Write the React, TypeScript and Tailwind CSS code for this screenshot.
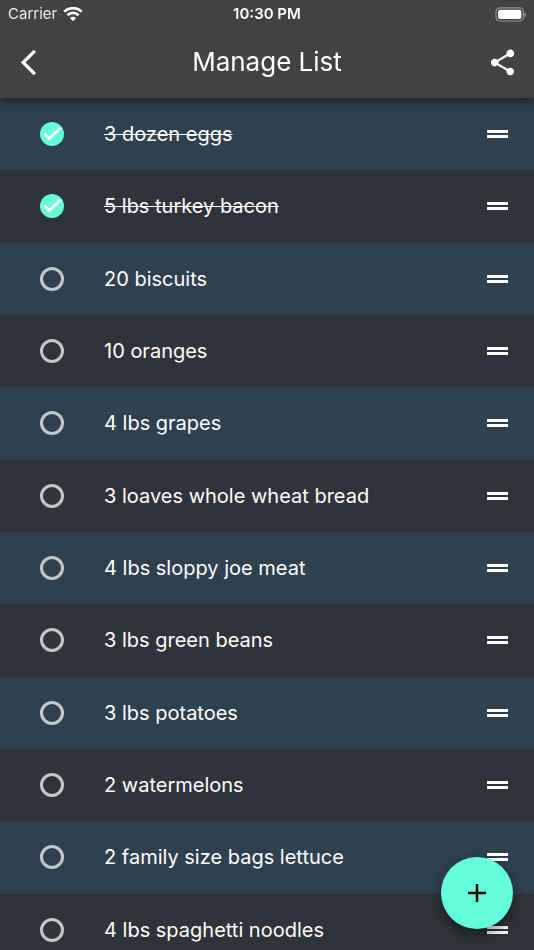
import { useState } from "react";
import { MdShare } from "react-icons/md";

const initialItems = [
  { id: "eggs", name: "3 dozen eggs", done: true },
  { id: "bacon", name: "5 lbs turkey bacon", done: true },
  { id: "biscuits", name: "20 biscuits", done: false },
  { id: "oranges", name: "10 oranges", done: false },
  { id: "grapes", name: "4 lbs grapes", done: false },
  { id: "bread", name: "3 loaves whole wheat bread", done: false },
  { id: "joe", name: "4 lbs sloppy joe meat", done: false },
  { id: "beans", name: "3 lbs green beans", done: false },
  { id: "potatoes", name: "3 lbs potatoes", done: false },
  { id: "watermelons", name: "2 watermelons", done: false },
  { id: "lettuce", name: "2 family size bags lettuce", done: false },
  { id: "noodles", name: "4 lbs spaghetti noodles", done: false },
];

function StatusBar() {
  return (
    <div className="grid grid-cols-3 items-center h-7 px-2">
      <div className="flex items-center gap-1.5 text-[15px] leading-5 text-white/90">
        Carrier
        <svg width="20" height="15" viewBox="0 0 20 15" fill="none" stroke="white" strokeWidth="2.7">
          <path d="M1.3 4.7a12.4 12.4 0 0 1 17.4 0" />
          <path d="M4.4 8.2a8 8 0 0 1 11.2 0" />
          <path d="M10 14.2l-3-3.1a4.3 4.3 0 0 1 6 0z" fill="white" stroke="none" />
        </svg>
      </div>
      <div className="text-center text-[15px] leading-5 font-semibold">10:30 PM</div>
      <svg className="justify-self-end" width="31" height="15" viewBox="0 0 31 15">
        <rect x="1" y="0.8" width="27.4" height="13.2" rx="4" fill="none" stroke="#939393" strokeWidth="1.2" />
        <rect x="3" y="2.8" width="23.4" height="9.2" rx="2.2" fill="white" />
        <path d="M29.4 5.2c2 .7 2 4 0 4.7z" fill="#939393" />
      </svg>
    </div>
  );
}

function Header() {
  return (
    <header className="relative z-10 shrink-0 h-[98px] bg-[#424242] shadow-[0_3px_10px_rgba(0,0,0,0.5)]">
      <StatusBar />
      <div className="flex items-center justify-between h-[68px] px-4">
        <button type="button" aria-label="Back">
          <svg width="31" height="31" viewBox="0 0 24 24" fill="white">
            <path d="M15.5 3.9l-1.8-1.8L3.8 12l9.9 9.9 1.8-1.8L7.4 12z" />
          </svg>
        </button>
        <h1 className="text-[26px] leading-8 font-normal">Manage List</h1>
        <button type="button" aria-label="Share">
          <MdShare size={31} />
        </button>
      </div>
    </header>
  );
}

function Row({ item, onToggle }: { item: (typeof initialItems)[number]; onToggle: () => void }) {
  return (
    <li className="flex items-center pl-10 pr-[26px] odd:bg-[#2f404e] even:bg-[#303339]">
      <label className="flex flex-1 items-center gap-10">
        <span className="relative flex size-6">
          <input
            type="checkbox"
            checked={item.done}
            onChange={onToggle}
            className="peer appearance-none size-6 rounded-full border-[3px] border-[#c4c7ca] checked:border-0 checked:bg-[#64ffda]"
          />
          <svg
            className="absolute inset-0 hidden pointer-events-none peer-checked:block"
            width="24"
            height="24"
            viewBox="0 0 24 24"
            fill="none"
            stroke="white"
            strokeWidth="2.8"
          >
            <path d="M3.8 10.9l5.7 5.7L20.2 5.9" />
          </svg>
        </span>
        <span className={item.done ? "text-xl line-through decoration-1" : "text-xl"}>{item.name}</span>
      </label>
      <button type="button" aria-label={"Move " + item.name} className="flex flex-col gap-0.5 w-[21px]">
        <span className="h-[3px] w-full bg-white" />
        <span className="h-[3px] w-full bg-white" />
      </button>
    </li>
  );
}

export default function App() {
  const [items, setItems] = useState(initialItems);

  const toggle = (id: string) =>
    setItems(items.map((item) => (item.id === id ? { ...item, done: !item.done } : item)));

  return (
    <div className="relative flex flex-col h-screen overflow-hidden bg-[#303339] text-white font-['Inter',sans-serif]">
      <Header />
      <main className="flex-1 min-h-0 overflow-y-auto [scrollbar-width:none]">
        <ul className="grid auto-rows-fr min-h-[868px]">
          {items.map((item) => (
            <Row key={item.id} item={item} onToggle={() => toggle(item.id)} />
          ))}
        </ul>
      </main>
      <button
        type="button"
        aria-label="Add item"
        className="absolute right-[21px] bottom-[21px] flex items-center justify-center size-[72px] rounded-full bg-[#64ffda] shadow-[0_6px_14px_rgba(0,0,0,0.45)]"
      >
        <svg width="18" height="18" viewBox="0 0 18 18" stroke="black" strokeWidth="2.5">
          <path d="M9 0v18M0 9h18" />
        </svg>
      </button>
    </div>
  );
}
